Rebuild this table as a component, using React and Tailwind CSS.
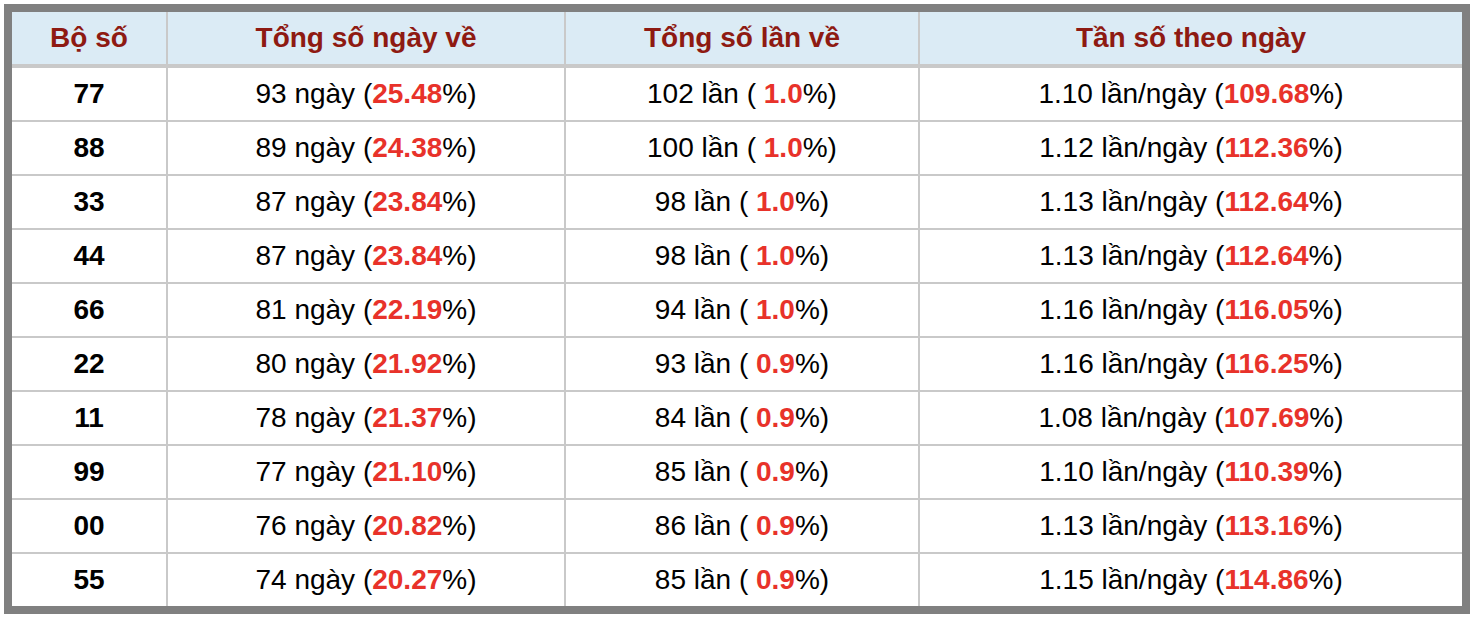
import React from "react";

const rows = [
  { so: "77", ngay: "93", pNgay: "25.48", lan: "102", pLan: "1.0", tanSo: "1.10", pTanSo: "109.68" },
  { so: "88", ngay: "89", pNgay: "24.38", lan: "100", pLan: "1.0", tanSo: "1.12", pTanSo: "112.36" },
  { so: "33", ngay: "87", pNgay: "23.84", lan: "98", pLan: "1.0", tanSo: "1.13", pTanSo: "112.64" },
  { so: "44", ngay: "87", pNgay: "23.84", lan: "98", pLan: "1.0", tanSo: "1.13", pTanSo: "112.64" },
  { so: "66", ngay: "81", pNgay: "22.19", lan: "94", pLan: "1.0", tanSo: "1.16", pTanSo: "116.05" },
  { so: "22", ngay: "80", pNgay: "21.92", lan: "93", pLan: "0.9", tanSo: "1.16", pTanSo: "116.25" },
  { so: "11", ngay: "78", pNgay: "21.37", lan: "84", pLan: "0.9", tanSo: "1.08", pTanSo: "107.69" },
  { so: "99", ngay: "77", pNgay: "21.10", lan: "85", pLan: "0.9", tanSo: "1.10", pTanSo: "110.39" },
  { so: "00", ngay: "76", pNgay: "20.82", lan: "86", pLan: "0.9", tanSo: "1.13", pTanSo: "113.16" },
  { so: "55", ngay: "74", pNgay: "20.27", lan: "85", pLan: "0.9", tanSo: "1.15", pTanSo: "114.86" },
];

const headers = ["Bộ số", "Tổng số ngày về", "Tổng số lần về", "Tần số theo ngày"];

const Red = ({ children }) => <span className="font-bold text-[#e8322a]">{children}</span>;

const App = () => {
  return (
    <div className="bg-white p-1 font-['Liberation_Sans',Arial,sans-serif] text-[28px] leading-none text-black">
      <div className="w-[1466px] border-8 border-[#808080]">
        <div className="grid grid-cols-[156px_398px_354px_542px]">
          {headers.map((h, i) => (
            <div
              key={h}
              className={`h-[56px] flex items-center justify-center bg-[#dbebf5] border-b-4 border-[#c9c9c9] font-bold text-[#8e1a12] ${i < 3 ? "border-r-2" : ""}`}
            >
              {h}
            </div>
          ))}

          {rows.map((r, idx) => {
            const last = idx === rows.length - 1;
            const base = `${last ? "h-[52px]" : "h-[54px] border-b-2"} flex items-center justify-center border-[#c9c9c9]`;
            return (
              <React.Fragment key={idx}>
                <div className={`${base} border-r-2 font-bold`}>{r.so}</div>
                <div className={`${base} border-r-2`}>
                  <span>
                    {r.ngay} ngày (<Red>{r.pNgay}</Red>%)
                  </span>
                </div>
                <div className={`${base} border-r-2`}>
                  <span>
                    {r.lan} lần ( <Red>{r.pLan}</Red>%)
                  </span>
                </div>
                <div className={base}>
                  <span>
                    {r.tanSo} lần/ngày (<Red>{r.pTanSo}</Red>%)
                  </span>
                </div>
              </React.Fragment>
            );
          })}
        </div>
      </div>
    </div>
  );
};

export default App;
